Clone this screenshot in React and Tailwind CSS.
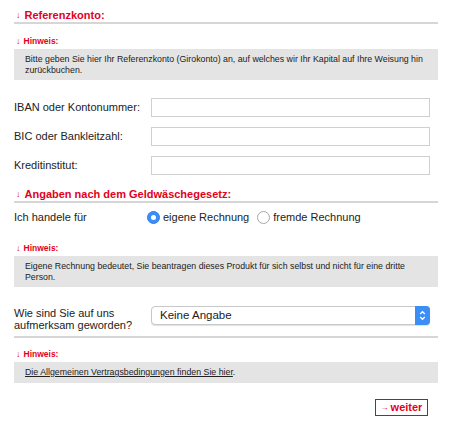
import React from 'react';

const red = 'text-[#e3001b]';

function Arrow() {
  return <span className="text-[9px] font-normal leading-none">↓</span>;
}

function Heading({ children }) {
  return (
    <div className="border-b-2 border-[#d6d6d6]">
      <div className={`flex h-[14px] items-center gap-[4px] pl-[2px] text-[11px] font-bold ${red}`}>
        <Arrow />
        <span>{children}</span>
      </div>
    </div>
  );
}

function Hinweis({ className = '', children }) {
  return (
    <div className={className}>
      <div className={`flex h-[12px] items-center gap-[3px] pl-[2px] text-[8.5px] font-bold ${red}`}>
        <Arrow />
        <span>Hinweis:</span>
      </div>
      <div className="mt-[2px] bg-[#e4e4e4] px-[11px] pb-[4px] pt-[5px] text-[8.8px] leading-[11px] text-[#222]">
        {children}
      </div>
    </div>
  );
}

function Field({ label }) {
  return (
    <div className="flex items-center">
      <label className="w-[137px] text-[11px] text-[#222]">{label}</label>
      <input className="h-[19px] w-[279px] border border-[#d0d0d0] bg-white outline-none" />
    </div>
  );
}

function Radio({ checked, label }) {
  return (
    <label className="flex items-center gap-[3px]">
      {checked ? (
        <span className="flex h-[13px] w-[13px] items-center justify-center rounded-full border border-[#2f7fe6] bg-[#3b8ef5]">
          <span className="h-[5px] w-[5px] rounded-full bg-white" />
        </span>
      ) : (
        <span className="h-[13px] w-[13px] rounded-full border border-[#a9a9a9] bg-white" />
      )}
      <span>{label}</span>
    </label>
  );
}

export default function App() {
  return (
    <div
      className="min-h-screen bg-white pl-[14px] pt-[8px]"
      style={{ fontFamily: '"Liberation Sans", Arial, sans-serif' }}
    >
      <div className="w-[424px]">
        <div className="pb-[1px]">
          <Heading>Referenzkonto:</Heading>
        </div>

        <Hinweis className="mt-[10px]">
          Bitte geben Sie hier Ihr Referenzkonto (Girokonto) an, auf welches wir Ihr Kapital auf Ihre Weisung hin
          zurückbuchen.
        </Hinweis>

        <div className="mt-[18px] flex flex-col gap-[10px]">
          <Field label="IBAN oder Kontonummer:" />
          <Field label="BIC oder Bankleitzahl:" />
          <Field label="Kreditinstitut:" />
        </div>

        <div className="mt-[12px]">
          <Heading>Angaben nach dem Geldwäschegesetz:</Heading>
        </div>

        <div className="mt-[6px] flex h-[16px] items-center text-[11px] text-[#222]">
          <span className="w-[133px]">Ich handele für</span>
          <div className="flex items-center gap-[8px]">
            <Radio checked label="eigene Rechnung" />
            <Radio label="fremde Rechnung" />
          </div>
        </div>

        <Hinweis className="mt-[17px]">
          Eigene Rechnung bedeutet, Sie beantragen dieses Produkt für sich selbst und nicht für eine dritte
          Person.
        </Hinweis>

        <div className="mt-[19px] border-b-2 border-[#d6d6d6] pb-[5px]">
          <div className="flex items-start">
            <span className="mt-[1px] w-[137px] text-[11px] leading-[12px] text-[#222]">
              Wie sind Sie auf uns
              <br />
              aufmerksam geworden?
            </span>
            <div className="flex h-[19px] w-[279px] items-center justify-between rounded-[4px] border border-[#c8c8c8] bg-white shadow-[0_1px_1px_rgba(0,0,0,0.12)]">
              <span className="pl-[8px] text-[11.5px] text-[#222]">Keine Angabe</span>
              <span className="-my-px -mr-px flex h-[19px] w-[15px] items-center justify-center rounded-r-[4px] bg-[#3b8ef5]">
                <svg width="7" height="11" viewBox="0 0 7 11" fill="none" stroke="white" strokeWidth="1.3">
                  <path d="M1.2 4 L3.5 1.7 L5.8 4" />
                  <path d="M1.2 7 L3.5 9.3 L5.8 7" />
                </svg>
              </span>
            </div>
          </div>
        </div>

        <Hinweis className="mt-[10px]">
          <div className="pb-[1px]">
            <a className="underline">Die Allgemeinen Vertragsbedingungen finden Sie hier</a>.
          </div>
        </Hinweis>

        <div className="mt-[16px] flex justify-end pr-[10px]">
          <button className={`flex h-[17px] w-[53px] items-center justify-center gap-[2px] border border-[#e3001b] bg-white text-[11px] font-bold ${red}`}>
            <span className="text-[8px] font-normal">→</span>
            <span>weiter</span>
          </button>
        </div>
      </div>
    </div>
  );
}
